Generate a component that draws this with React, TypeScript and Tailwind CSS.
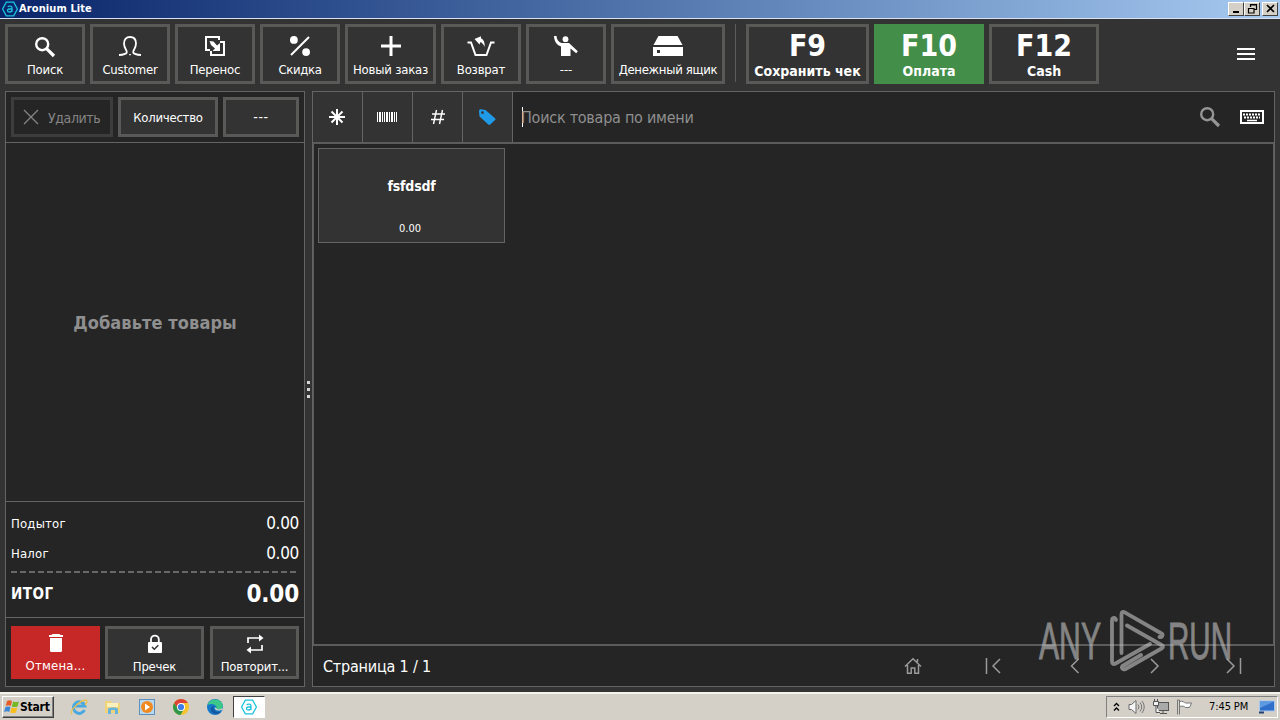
import React from 'react';

type ToolProps = {
  label: string;
  width: string;
  tracking?: string;
  children?: React.ReactNode;
};

const ToolButton: React.FC<ToolProps> = ({ label, width, tracking = 'tracking-[-0.2px]', children }) => (
  <button className={`h-[60px] shrink-0 border-3 border-[#595957] bg-[#333333] flex flex-col items-center pt-[9px] ${width}`}>
    <span className="h-5 flex items-center justify-center">{children}</span>
    <span className={`mt-[6px] text-[13px] leading-4 whitespace-nowrap ${tracking}`}>{label}</span>
  </button>
);

type PayProps = { hotkey: string; label: string; look: string };

const PayButton: React.FC<PayProps> = ({ hotkey, label, look }) => (
  <button className={`h-[60px] shrink-0 flex flex-col items-center font-bold border-3 ${look}`}>
    <span className="mt-[4px] text-[30px] leading-[30px]">{hotkey}</span>
    <span className="mt-[2px] text-[14px] leading-4 whitespace-nowrap">{label}</span>
  </button>
);

/* ---------- icons ---------- */

const SearchIcon = ({ className = '' }) => (
  <svg width="22" height="22" viewBox="0 0 22 22" fill="none" stroke="currentColor" className={className}>
    <circle cx="8.2" cy="8.2" r="6" strokeWidth="2.4" />
    <path d="M12.6 12.6l7.4 7.4" strokeWidth="3.2" />
  </svg>
);

const CustomerIcon = () => (
  <svg width="24" height="20" viewBox="0 0 24 20" fill="none" stroke="white" strokeWidth="1.8">
    <path d="M1 19c3.500-.2 7-1 7.800-2.500.7-1.700-2.800-4-2.800-9C6 3.300 8.400 1 12 1s6 2.300 6 6.500c0 5-3.500 7.300-2.800 9C16 18 19.500 18.800 23 19" />
    <path d="M11.200 18.600h1.600" strokeWidth="1.400" />
  </svg>
);

const TransferIcon = () => (
  <svg width="20" height="20" viewBox="0 0 20 20" fill="none" stroke="white" strokeWidth="2">
    <path d="M5 14H1V1h13v3" />
    <path d="M15 6h4v13H6v-4" />
    <path d="M4.500 5l4 .5 3.500 4 3-2.500V15H7.500L10 12.500 6 9z" fill="white" stroke="none" />
  </svg>
);

const PercentIcon = () => (
  <svg width="20" height="20" viewBox="0 0 20 20" fill="white">
    <circle cx="3.900" cy="3.900" r="3.900" />
    <circle cx="16.100" cy="16.100" r="3.900" />
    <path d="M1 19L19 1" stroke="white" strokeWidth="2" />
  </svg>
);

const PlusIcon = () => (
  <svg width="20" height="20" viewBox="0 0 20 20" stroke="white" strokeWidth="3">
    <path d="M10 0v20M0 10h20" />
  </svg>
);

const RefundIcon = () => (
  <svg width="28" height="20" viewBox="0 0 28 20" fill="none" stroke="white" strokeWidth="2">
    <path d="M.500 6.500H4l4.500 12.500h11L24 6.500h3.500" />
    <path d="M7.500 3L14 .300v2c2.800 1.300 4 4.500 3.600 8.700-1-2.400-2.200-4-4.100-5L12.500 8.500z" fill="white" stroke="none" />
  </svg>
);

const WaiterIcon = () => (
  <svg width="24" height="20" viewBox="0 0 24 20" fill="white">
    <circle cx="11.500" cy="3.200" r="2.900" />
    <path d="M0 0h2.500c.2 3.500 2 6 5 7h7.500l8.800 8.200-1.600 2-5.700-4.700V20H7v-9.500C2.800 9 .2 5.500 0 0z" />
  </svg>
);

const DrawerIcon = () => (
  <svg width="30" height="20" viewBox="0 0 30 20" fill="white">
    <path d="M5.500 0h19L29.500 9H.500z" />
    <path fillRule="evenodd" d="M0 11h30v9H0zM4 14v3h3v-3z" />
  </svg>
);

const AroniumIcon = ({ className = '', size = 16 }) => (
  <svg width={size} height={size} viewBox="0 0 16 16" fill="none" stroke="#1cc4dc" className={className}>
    <path d="M4.300 1.200h7.400L15.400 8l-3.700 6.800H4.300L.600 8z" strokeWidth="1.300" />
    <path d="M5.700 5.800c1.200-1 4.300-1 4.300 1v4.300M10 8H7.200c-2.300 0-2.300 3 0 3 1.500 0 2.800-.7 2.800-2" strokeWidth="1.300" />
  </svg>
);

const TitleBar: React.FC = () => (
  <div className="h-[19px] shrink-0 flex items-center border-b border-[#d6e2f3] bg-linear-to-r from-[#0a246a] to-[#a6caf0] pl-[2px] pr-[2px]">
    <AroniumIcon />
    <span className="ml-px text-[11px] leading-4 font-bold tracking-[0.1px]">Aronium Lite</span>
    <div className="ml-auto flex text-black">
      <WinButton>
        <path d="M3 9h6" strokeWidth="2" />
      </WinButton>
      <WinButton>
        <path d="M4.500 4V1.500h6v5H8.500M4 2h7M2.500 5.500h5.500v4.500H2.500zM2 5.500h6.500" strokeWidth="1.200" />
      </WinButton>
      <span className="w-[2px]" />
      <WinButton>
        <path d="M3 2l7 7M10 2L3 9" strokeWidth="1.700" />
      </WinButton>
    </div>
  </div>
);

const WinButton: React.FC<{ children: React.ReactNode }> = ({ children }) => (
  <span className="w-4 h-[14px] bg-[#d4d0c8] border border-t-white border-l-white border-r-[#404040] border-b-[#404040] flex items-center justify-center">
    <svg width="13" height="12" viewBox="0 0 13 12" fill="none" stroke="currentColor">{children}</svg>
  </span>
);

const Toolbar: React.FC = () => (
  <div className="h-[72px] shrink-0 flex gap-[5px] pl-[5px] pt-[5px]">
    <ToolButton label="Поиск" width="w-20"><SearchIcon className="translate-y-px" /></ToolButton>
    <ToolButton label="Customer" width="w-20"><CustomerIcon /></ToolButton>
    <ToolButton label="Перенос" width="w-20"><TransferIcon /></ToolButton>
    <ToolButton label="Скидка" width="w-20" tracking="tracking-[-0.35px]"><PercentIcon /></ToolButton>
    <ToolButton label="Новый заказ" width="w-[91px]"><PlusIcon /></ToolButton>
    <ToolButton label="Возврат" width="w-20"><RefundIcon /></ToolButton>
    <ToolButton label="---" width="w-20" tracking="tracking-normal"><WaiterIcon /></ToolButton>
    <ToolButton label="Денежный ящик" width="w-[114px]" tracking="tracking-[-0.3px]"><DrawerIcon /></ToolButton>
    <span className="w-px h-[58px] bg-[#5c5c5c] ml-[5px] mr-[5px]" />
    <PayButton hotkey="F9" label="Сохранить чек" look="w-[123px] bg-[#333333] border-[#595957]" />
    <PayButton hotkey="F10" label="Оплата" look="w-[110px] bg-[#438e48] border-[#438e48]" />
    <PayButton hotkey="F12" label="Cash" look="w-[110px] bg-[#333333] border-[#595957]" />
    <span className="ml-auto mr-[25px] mt-[24px] flex flex-col gap-[3px]">
      <span className="w-[18px] h-[2px] bg-white" />
      <span className="w-[18px] h-[2px] bg-white" />
      <span className="w-[18px] h-[2px] bg-white" />
    </span>
  </div>
);

const OrderPanel: React.FC = () => (
  <section className="w-[300px] h-[596px] shrink-0 border border-[#646464] bg-[#252525] flex flex-col">
    <div className="h-[51px] shrink-0 flex gap-[5px] pl-[5px] pt-[5px] border-b border-[#646464]">
      <button className="w-[102px] h-10 border-3 border-[#3d3d3d] text-[#858585] flex items-center pl-[9px] gap-[9px]">
        <svg width="16" height="16" viewBox="0 0 16 16" stroke="currentColor" strokeWidth="1.300">
          <path d="M1 1l14 14M15 1L1 15" />
        </svg>
        <span className="text-[14px] leading-4 tracking-[-0.4px] pt-[2px]">Удалить</span>
      </button>
      <button className="w-[100px] h-10 pt-px border-3 border-[#595957] bg-[#333333] text-[13px] leading-4 tracking-[-0.25px]">Количество</button>
      <button className="w-[76px] h-10 border-3 border-[#595957] bg-[#333333] text-[14px] leading-4 tracking-[0.6px]">---</button>
    </div>
    <div className="h-[359px] shrink-0 border-b border-[#646464] flex items-center justify-center">
      <span className="text-[18px] font-bold text-[#8f8f8f] tracking-[0.1px]">Добавьте товары</span>
    </div>
    <div className="h-[116px] shrink-0 px-[5px] pt-[6px] border-b border-[#646464]">
      <div className="h-[30px] flex items-center justify-between pt-[2px]">
        <span className="text-[13px] tracking-[0.2px]">Подытог</span>
        <span className="text-[17px] tracking-[-0.3px]">0.00</span>
      </div>
      <div className="h-[30px] flex items-center justify-between pt-[2px]">
        <span className="text-[13px] tracking-[0.2px]">Налог</span>
        <span className="text-[17px] tracking-[-0.3px]">0.00</span>
      </div>
      <svg width="288" height="8" viewBox="0 0 288 8" className="block">
        <path d="M0 4h285" stroke="#686868" strokeWidth="2" strokeDasharray="6 3" />
      </svg>
      <div className="h-[34px] flex items-center justify-between font-bold pt-[2px]">
        <span className="text-[15px] tracking-[0.5px]">ИТОГ</span>
        <span className="text-[24px] tracking-[-0.2px]">0.00</span>
      </div>
    </div>
    <div className="flex pt-[8px] pl-[5px] text-[13px] leading-4 tracking-[-0.2px]">
      <button className="w-[89px] h-[53px] bg-[#c62828] flex flex-col items-center pt-[7px]">
        <svg width="16" height="20" viewBox="0 0 16 20" fill="white">
          <path d="M4.500 1h7l1 1H15v2H1V2h2.500zM2 5h12v12.500c0 1-.8 1.500-1.500 1.500h-9C2.800 19 2 18.500 2 17.500z" />
        </svg>
        <span className="mt-[5px] tracking-[0.2px]">Отмена...</span>
      </button>
      <button className="ml-[5px] w-[99px] h-[53px] border-3 border-[#595957] bg-[#333333] flex flex-col items-center pt-[5px]">
        <svg width="16" height="20" viewBox="0 0 16 20" fill="none" stroke="white">
          <path d="M4 9V5.500a3.900 3.900 0 017.800 0V9" strokeWidth="1.800" />
          <rect x="1" y="8" width="14" height="11" rx="1" fill="white" stroke="none" />
          <path d="M5 13l2.300 2.300 4-4" stroke="#333333" strokeWidth="1.500" />
        </svg>
        <span className="mt-[5px]">Пречек</span>
      </button>
      <button className="ml-[6px] w-[89px] h-[53px] border-3 border-[#595957] bg-[#333333] flex flex-col items-center pt-[5px]">
        <svg width="18" height="20" viewBox="0 0 18 20" fill="none" stroke="white" strokeWidth="1.700">
          <path d="M2 9V4h13M16 11v5H3" />
          <path d="M13 .5L17.500 4 13 7.500zM5 12.500L.500 16 5 19.500z" fill="white" stroke="none" />
        </svg>
        <span className="mt-[5px]">Повторит...</span>
      </button>
    </div>
  </section>
);

const SearchRow: React.FC = () => (
  <div className="h-[50px] shrink-0 flex">
    <span className="w-[50px] border-r border-[#646464] bg-[#333333] flex items-center justify-center pr-px">
      <svg width="16" height="16" viewBox="0 0 16 16" stroke="white" strokeWidth="2">
        <path d="M8 0v16M0 8h16M2.500 2.500l11 11M13.500 2.500l-11 11" />
      </svg>
    </span>
    <span className="w-[50px] border-r border-[#646464] bg-[#333333] flex items-center justify-center pr-px">
      <svg width="20" height="10" viewBox="0 0 20 10" fill="white">
        <path d="M0 0h1v10H0zM2 0h2v10H2zM5 0h1v10H5zM7 0h1v10H7zM9 0h2v10H9zM12 0h1v10h-1zM14 0h2v10h-2zM17 0h1v10h-1zM19 0h1v10h-1z" />
      </svg>
    </span>
    <span className="w-[50px] border-r border-[#646464] bg-[#333333] flex items-center justify-center">
      <svg width="16" height="16" viewBox="0 0 16 16" stroke="white" strokeWidth="1.400">
        <path d="M6.500 1L3.500 15M12.500 1l-3 14M2 5h13M1 10.500h13" />
      </svg>
    </span>
    <span className="w-[50px] border-r border-[#646464] bg-[#333333] flex items-center justify-center pr-[2px]">
      <svg width="18" height="18" viewBox="0 0 18 18" fill="#1e9ae6">
        <path fillRule="evenodd" d="M1 3C1 1.800 1.700 1.300 2.800 1.300L7.500 2 17 10.200c.7.600.7 1.200 0 1.900l-4.700 4.400c-.7.600-1.300.6-2 0L1.500 8.500zM4.500 3.200a1.400 1.400 0 100 2.800 1.400 1.400 0 000-2.800z" />
      </svg>
    </span>
    <div className="flex-1 flex items-center pl-[9px] pr-[10px]">
      <span className="h-[20px] w-px bg-white" />
      <span className="text-[16px] leading-5 text-[#8f8f8f] tracking-[-0.25px] -ml-[2px] mt-[2px]">Поиск товара по имени</span>
      <SearchIcon className="ml-auto text-[#959595]" />
      <svg width="24" height="14" viewBox="0 0 24 14" fill="none" stroke="white" className="ml-[19px]">
        <rect x="1" y="1" width="22" height="12" strokeWidth="2" />
        <path d="M3 4.500h18M4 7.500h16" strokeWidth="2" strokeDasharray="2 1" />
        <path d="M7 10.500h10" strokeWidth="1.500" />
      </svg>
    </div>
  </div>
);

const PagerIcon: React.FC<{ d: string }> = ({ d }) => (
  <div className="w-20 shrink-0 flex justify-center">
    <svg width="18" height="18" viewBox="0 0 18 18" fill="none" stroke="currentColor" strokeWidth="1.500">
      <path d={d} />
    </svg>
  </div>
);

const Pager: React.FC = () => (
  <div className="flex-1 flex items-center pl-[10px] text-[#9a9a9a]">
    <span className="w-[550px] shrink-0 pt-[2px] text-[16px] text-white tracking-[-0.2px]">Страница 1 / 1</span>
    <PagerIcon d="M1 9.500l8-7.700 8 7.700M3.500 8v8.200h3.700V11h3.600v5.200h3.700V8M13.500 5V2" />
    <PagerIcon d="M2.500 1v16M16 2L9 9l7 7" />
    <PagerIcon d="M14.500 2l-7 7 7 7" />
    <PagerIcon d="M7 2l7 7-7 7" />
    <PagerIcon d="M3 2l7 7-7 7M16.500 1v16" />
  </div>
);

const ProductPanel: React.FC = () => (
  <section className="w-[963px] h-[596px] shrink-0 border border-[#646464] bg-[#252525] flex flex-col">
    <SearchRow />
    <div className="h-[504px] shrink-0 border-2 border-l border-r border-[#5c5c5c] pl-[4px] pt-[4px]">
      <div className="w-[187px] h-[95px] border border-[#646464] bg-[#333333] flex flex-col items-center">
        <span className="mt-[27px] text-[14px] leading-5 font-bold tracking-[-0.2px]">fsfdsdf</span>
        <span className="mt-[25px] mr-[3px] text-[11px] leading-4">0.00</span>
      </div>
    </div>
    <Pager />
  </section>
);

const Watermark: React.FC = () => (
  <svg width="200" height="66" viewBox="0 0 200 66" className="absolute left-[1037px] top-[608px] opacity-60 overflow-visible" fill="none" stroke="#c4c4c4">
    <g fill="#c4c4c4" strokeWidth=".9" fontFamily="Liberation Sans Narrow, Liberation Sans, sans-serif" fontSize="52">
      <text x="2" y="51" textLength="62" lengthAdjust="spacingAndGlyphs">ANY</text>
      <text x="131" y="51" textLength="64" lengthAdjust="spacingAndGlyphs">RUN</text>
    </g>
    <g strokeWidth="3.800" strokeLinejoin="round" strokeLinecap="round">
      <path d="M84.500 45V6c0-2 1.500-2.600 3.200-1.700L124.500 25.500c2 1.200.8 4.400-2 3.500" />
      <path d="M79 12c-.2-3-4-2.500-4 .5V53.500c0 2.500 1.500 3 3.500 2L113 36" />
      <path d="M90 17.500L124.500 37c2 1.200 2 2.300 0 3.500L88.500 61c-2.500 1.300-4.500-1-3-3L104 47" />
    </g>
  </svg>
);

const Taskbar: React.FC = () => (
  <footer className="h-[28px] shrink-0 bg-[#d4d0c8] border-t-2 border-[#f5f3ee] flex items-center text-black pl-[2px] pr-[2px]">
    <span className="w-[52px] h-[22px] border border-t-white border-l-white border-r-[#404040] border-b-[#404040] shadow-[inset_-1px_-1px_#808080] flex items-center pl-px">
      <svg width="16" height="16" viewBox="0 0 16 16">
        <path d="M3 2c2-1 3.500-.8 5 0L6.800 7C5 6 3.500 6.200 1.800 7z" fill="#e65b27" />
        <path d="M9 2.500c2 .8 3.800.8 6 0L13.600 7.500c-2 .8-4 .7-5.800 0z" fill="#76b82a" />
        <path d="M1.500 8c2-.8 3.500-.8 5 0L5.200 13C3.500 12 2 12.200 0 13z" fill="#3c87d6" />
        <path d="M7.500 8.500c2 .8 3.800.8 5.800 0L12 13.500c-2 .8-4 .7-5.800 0z" fill="#f9bd1d" />
      </svg>
      <span className="text-[12px] font-bold tracking-[-0.2px]">Start</span>
    </span>
    <div className="flex items-center ml-[16px] gap-[16px]">
      <svg width="18" height="18" viewBox="0 0 18 18" fill="none">
        <path d="M14.500 12a5.800 5.800 0 11.300-4H5" stroke="#48a8df" strokeWidth="3" />
        <path d="M2 16C-1 13 10 2 16 2c2 1 0 4-1 5" stroke="#ecc04a" strokeWidth="1.300" />
      </svg>
      <svg width="18" height="18" viewBox="0 0 18 18">
        <path d="M1 3h6l1 2h8v10H1z" fill="#efd37a" />
        <path d="M3 5h11v4H3z" fill="#fbf0bc" />
        <path d="M4 16v-5c0-2 10-2 10 0v5h-3v-4H7v4z" fill="#66b4dc" />
      </svg>
      <svg width="18" height="18" viewBox="0 0 18 18">
        <rect x="1.500" y="1.500" width="15" height="15" fill="#b9d8ef" stroke="#5d91bd" />
        <circle cx="9" cy="9" r="6" fill="#f18a1e" />
        <path d="M7 5.500l5 3.500-5 3.500z" fill="white" />
      </svg>
      <svg width="18" height="18" viewBox="0 0 18 18">
        <circle cx="9" cy="9" r="8" fill="#f4c52c" />
        <path d="M2.100 5A8 8 0 0115.900 5H9L6 11z" fill="#dd4435" />
        <path d="M2.100 5A8 8 0 008.500 17l3.500-6H6z" fill="#31984a" />
        <circle cx="9" cy="9" r="4" fill="white" />
        <circle cx="9" cy="9" r="3.100" fill="#3c7de8" />
      </svg>
      <svg width="18" height="18" viewBox="0 0 18 18">
        <circle cx="9" cy="9" r="8" fill="#1678c8" />
        <path d="M1.500 7C3 1 12-1 16 5c2 4 0 7-4 7-2 0-3-1-1.500-2C11 6 5 5 1.500 7z" fill="#3cc88b" />
        <path d="M8 8c-2 3 1 7 7 5.500-3 4-9 3-10-1C4.500 10 6 8 8 8z" fill="#1257a0" />
        <path d="M9 9c-1 3 2 4.500 6.500 3l1 0v-2C14 12 11 12 9 9z" fill="#d4d0c8" />
      </svg>
    </div>
    <span className="ml-[9px] w-[32px] h-[22px] bg-white border border-t-[#404040] border-l-[#404040] border-r-white border-b-white flex items-center justify-center">
      <AroniumIcon />
    </span>
    <div className="ml-auto w-[172px] h-[22px] border border-t-[#808080] border-l-[#808080] border-r-white border-b-white flex items-center pl-[6px]">
      <svg width="7" height="10" viewBox="0 0 7 10" fill="none" stroke="black" strokeWidth="1.300">
        <path d="M1 4l2.500-2.500L6 4M1 8.500L3.500 6 6 8.500" />
      </svg>
      <svg width="17" height="16" viewBox="0 0 17 16" fill="#f5f5f5" stroke="#6b6b6b" className="ml-[8px]">
        <path d="M1 5.500h2.500L8 1.500v13l-4.500-4H1z" />
        <path d="M10 5.500q2 2.500 0 5M12 3.500q3.500 4.500 0 9M14 2q4.500 6 0 12" fill="none" strokeWidth=".9" />
      </svg>
      <svg width="18" height="16" viewBox="0 0 18 16" fill="#a9a9a9" stroke="#555555" className="ml-[7px]">
        <rect x="5.500" y="3.500" width="11" height="8" />
        <path d="M8 14.500h7M11 12v2" />
        <path d="M1.500 2.500h5v4h-5zM2.500 0v2.500M5.500 0v2.500M4 7v6.500h4" fill="#f3f3f3" />
      </svg>
      <svg width="17" height="16" viewBox="0 0 17 16" fill="white" stroke="#777777" className="ml-[6px]">
        <path d="M1.500 1v14.500M3.500 1v14.500M1.500 1h2M3.500 2.500c3-1 5 1 6 1.500h6l-2 4.500h-4c-1-1-3-2-6-1z" />
      </svg>
      <span className="ml-[16px] text-[11px] leading-4 whitespace-nowrap tracking-[-0.1px]">7:45 PM</span>
      <svg width="17" height="14" viewBox="0 0 17 14" className="ml-auto mr-px">
        <rect x=".500" y="1" width="15" height="10" fill="#2f6fca" stroke="#a7c8ee" />
        <path d="M1 1.500h14L1 8z" fill="#5e9ae2" />
        <path d="M0 11.500h5v2H0z" fill="#24406c" />
      </svg>
    </div>
  </footer>
);

export default function App() {
  return (
    <div className="relative w-[1280px] h-[720px] overflow-hidden bg-[#333333] text-white flex flex-col font-['DejaVu_Sans_Condensed','DejaVu_Sans',sans-serif]">
      <TitleBar />
      <Toolbar />
      <main className="h-[601px] shrink-0 flex pl-[5px]">
        <OrderPanel />
        <div className="w-[7px] h-[596px] flex flex-col items-center justify-center gap-[4px]">
          <span className="w-[3px] h-[3px] bg-[#d6d6d6]" />
          <span className="w-[3px] h-[3px] bg-[#d6d6d6]" />
          <span className="w-[3px] h-[3px] bg-[#d6d6d6]" />
        </div>
        <ProductPanel />
      </main>
      <Taskbar />
      <Watermark />
    </div>
  );
}
